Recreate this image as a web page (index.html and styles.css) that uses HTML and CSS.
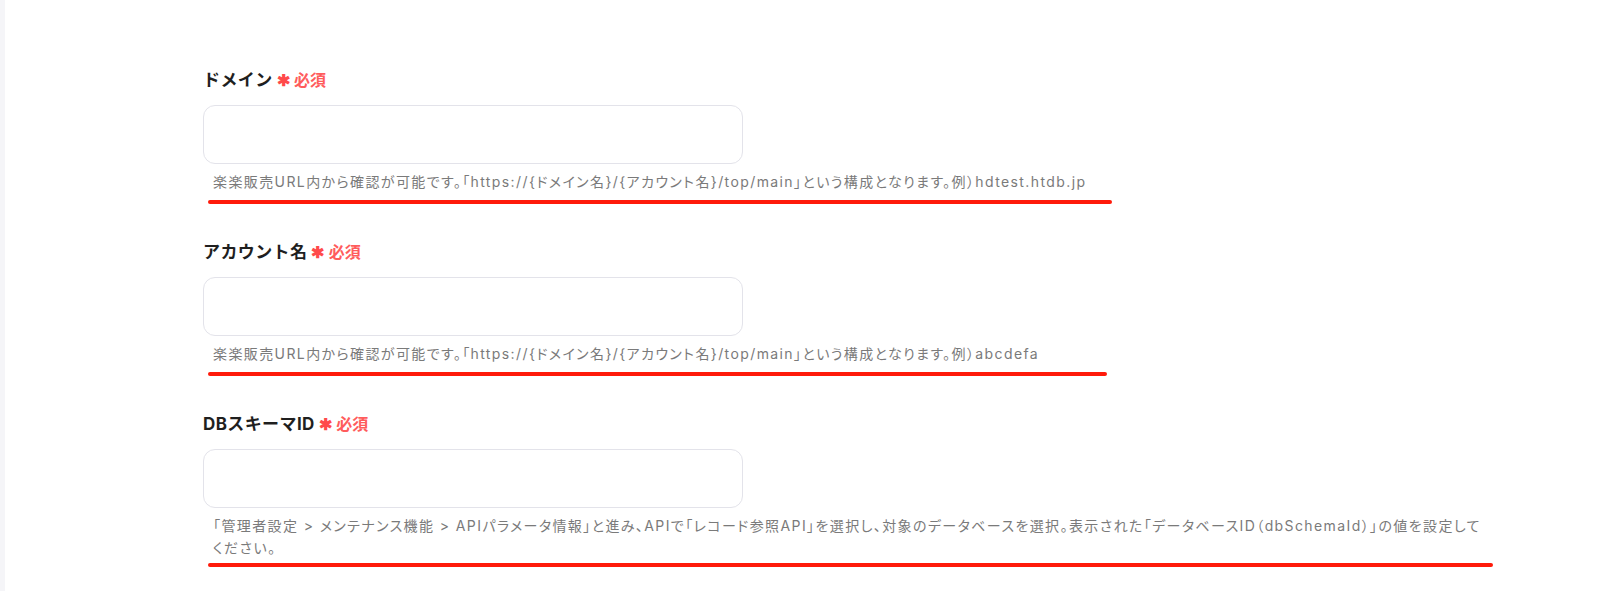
FILE: index.html
```html
<!DOCTYPE html>
<html lang="ja">
<head>
  <meta charset="UTF-8" />
  <meta name="viewport" content="width=device-width, initial-scale=1.0"/>
  <title>楽楽販売 接続設定</title>
  <link rel="stylesheet" href="styles.css">
</head>
<body>

  <div class="page">
    <div class="form">

      <div class="field">
        <div class="label">ドメイン <span class="star">✱</span><span class="req">必須</span></div>
        <div class="input"></div>
        <p class="help">楽楽販売URL内から確認が可能です。「https://{ドメイン名}/{アカウント名}/top/main」という構成となります。例）hdtest.htdb.jp</p>
        <div class="mark mark-domain"></div>
      </div>

      <div class="field">
        <div class="label">アカウント名 <span class="star">✱</span><span class="req">必須</span></div>
        <div class="input"></div>
        <p class="help">楽楽販売URL内から確認が可能です。「https://{ドメイン名}/{アカウント名}/top/main」という構成となります。例）abcdefa</p>
        <div class="mark mark-account"></div>
      </div>

      <div class="field">
        <div class="label">DBスキーマID <span class="star">✱</span><span class="req">必須</span></div>
        <div class="input"></div>
        <p class="help">「管理者設定 &gt; メンテナンス機能 &gt; APIパラメータ情報」と進み、APIで「レコード参照API」を選択し、対象のデータベースを選択。表示された「データベースID（dbSchemaId）」の値を設定してください。</p>
        <div class="mark mark-schema"></div>
      </div>

    </div>
  </div>

</body>
</html>
```

FILE: styles.css
```css
body {
  margin: 0;
  background-color: #ffffff;
  color: #1f1f1f;
  font-family: Inter, "Noto Sans CJK JP", sans-serif;
}

.page {
  min-height: 591px;
  border-left: 5px solid #f5f5f8;
  box-sizing: border-box;
  padding: 68px 0 0 198px;
}

.form {
  display: flex;
  flex-direction: column;
  gap: 36px;
}

.label {
  font-size: 17px;
  line-height: 24px;
  font-weight: 700;
  letter-spacing: 0.4px;
  display: flex;
  align-items: center;
}

.star {
  color: #ff4a4a;
  font-size: 16px;
  margin-left: 4px;
  margin-right: 4px;
}

.req {
  color: #ff5c5c;
  font-size: 16px;
  font-weight: 600;
  letter-spacing: 0;
}

.input {
  margin-top: 13px;
  width: 540px;
  height: 59px;
  border: 1px solid #e3e3ea;
  border-radius: 12px;
  box-sizing: border-box;
  background: #fff;
}

.help {
  margin: 7px 0 0;
  padding-left: 10px;
  width: 1278px;
  font-size: 14px;
  line-height: 22px;
  letter-spacing: 1.4px;
  font-feature-settings: "palt";
  color: #7a7a7a;
}

.mark {
  margin: 7px 0 0 5px;
  height: 4px;
  border-radius: 2px;
  background-color: #ff1a0a;
}

.mark-domain { width: 904px; }
.mark-account { width: 899px; }
.mark-schema { width: 1285px; margin-top: 4px; }
```
